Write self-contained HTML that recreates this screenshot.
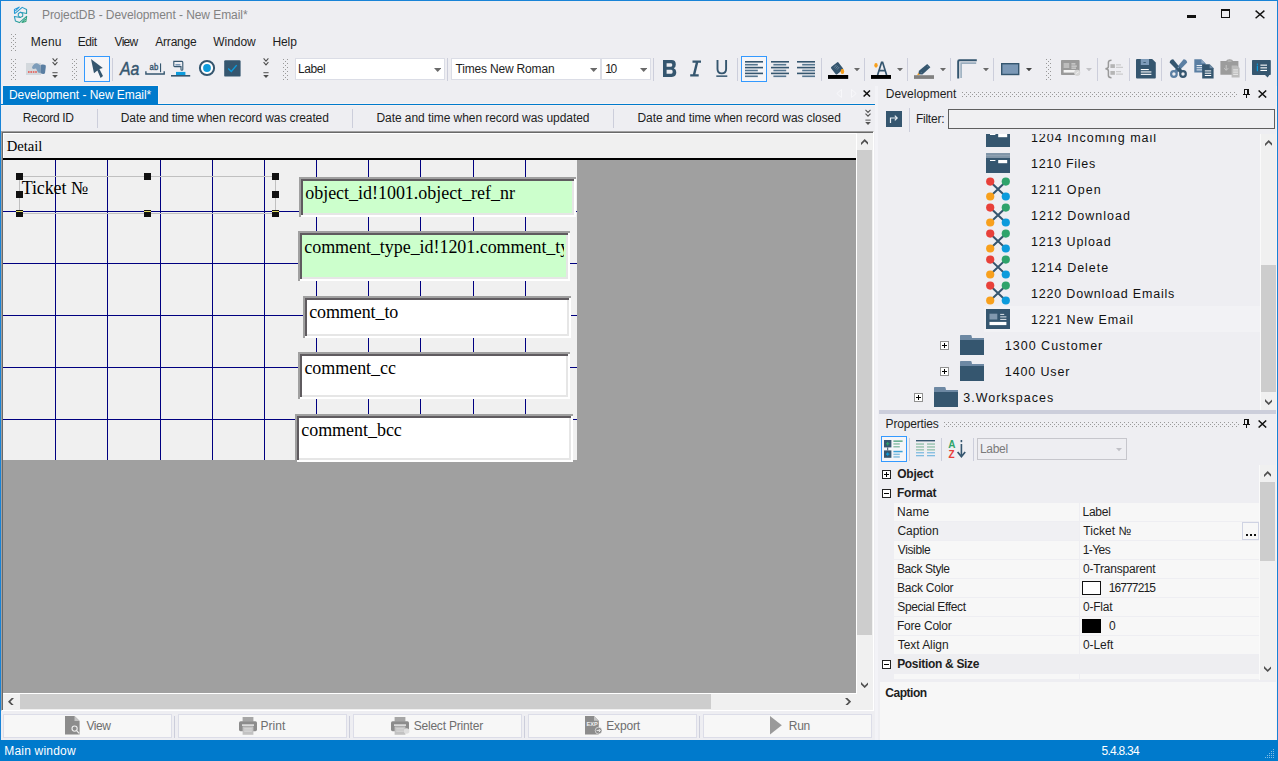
<!DOCTYPE html><html><head><meta charset="utf-8"><title>ProjectDB - Development - New Email*</title><style>
html,body{margin:0;padding:0}body{width:1278px;height:761px;position:relative;overflow:hidden;background:#eeeef2;font-family:"Liberation Sans",sans-serif;font-size:12px}
div,svg,span{position:absolute;box-sizing:border-box}
.t{white-space:pre;display:block}
.sep{width:1px;background:#cccedb}
.combo{background:#fff;border:1px solid #dbdde6}
.btn{background:#f7f7f7;border:1px solid #dcdde8}
</style></head><body>
<div style="left:0px;top:0px;width:1278px;height:1px;background:#1883d7"></div>
<div style="left:0px;top:0px;width:1px;height:761px;background:#1883d7"></div>
<div style="left:1277px;top:0px;width:1px;height:761px;background:#1883d7"></div>
<svg style="left:13px;top:6px;" width="16" height="18" viewBox="0 0 16 18"><defs><linearGradient id="ga" gradientUnits="userSpaceOnUse" x1="1" y1="2" x2="14" y2="17"><stop offset="0" stop-color="#1e96e6"/><stop offset="0.5" stop-color="#2a9db5"/><stop offset="1" stop-color="#2fa35f"/></linearGradient></defs><g fill="none" stroke="url(#ga)" stroke-width="1.05" stroke-linejoin="round" stroke-linecap="round"><path d="M1.5 7.3 L1.4 3.4 L6.2 1.1 L2.6 4.6"/><path d="M2.0 7.4 L9.2 1.4 L13.6 3.5 L13.6 7.4 L7.5 6.3"/><path d="M5.3 7.5 L7.5 6.3 L9.7 7.6 L9.7 10.2 L7.5 11.4 L5.3 10.1 Z"/><path d="M13.6 10.4 L6.4 16.6 L2.4 14.9 L1.4 10.6 L7.4 11.4"/><path d="M13.7 10.5 L12.8 15.6 L9.0 16.5 L12.4 13.2"/></g></svg>
<div style="left:1187px;top:14.6px;width:9.3px;height:3.3px;background:#111"></div>
<div style="left:1221px;top:9px;width:9.2px;height:9.2px;border:1px solid #111;border-top:2.6px solid #111"></div>
<svg style="left:1255px;top:9.6px;" width="10" height="9" viewBox="0 0 10 9"><path d="M0.6 0.6 L9.4 8.2 M9.4 0.6 L0.6 8.2" stroke="#111" stroke-width="1.4" fill="none"/></svg>
<svg style="left:11px;top:34px;shape-rendering:crispEdges;" width="5" height="18" viewBox="0 0 5 18"><g fill="#999"><rect x="0" y="0" width="1" height="1"/><rect x="4" y="0" width="1" height="1"/><rect x="2" y="2" width="1" height="1"/><rect x="0" y="4" width="1" height="1"/><rect x="4" y="4" width="1" height="1"/><rect x="2" y="6" width="1" height="1"/><rect x="0" y="8" width="1" height="1"/><rect x="4" y="8" width="1" height="1"/><rect x="2" y="10" width="1" height="1"/><rect x="0" y="12" width="1" height="1"/><rect x="4" y="12" width="1" height="1"/><rect x="2" y="14" width="1" height="1"/><rect x="0" y="16" width="1" height="1"/><rect x="4" y="16" width="1" height="1"/></g></svg>
<svg style="left:11px;top:59px;shape-rendering:crispEdges;" width="5" height="21" viewBox="0 0 5 21"><g fill="#999"><rect x="0" y="0" width="1" height="1"/><rect x="4" y="0" width="1" height="1"/><rect x="2" y="2" width="1" height="1"/><rect x="0" y="4" width="1" height="1"/><rect x="4" y="4" width="1" height="1"/><rect x="2" y="6" width="1" height="1"/><rect x="0" y="8" width="1" height="1"/><rect x="4" y="8" width="1" height="1"/><rect x="2" y="10" width="1" height="1"/><rect x="0" y="12" width="1" height="1"/><rect x="4" y="12" width="1" height="1"/><rect x="2" y="14" width="1" height="1"/><rect x="0" y="16" width="1" height="1"/><rect x="4" y="16" width="1" height="1"/><rect x="2" y="18" width="1" height="1"/><rect x="0" y="20" width="1" height="1"/><rect x="4" y="20" width="1" height="1"/></g></svg>
<svg style="left:26px;top:63px;" width="20" height="12" viewBox="0 0 20 12"><rect x="0" y="0" width="15" height="12" fill="#d3d8dd"/><rect x="2" y="8.2" width="1.6" height="1.6" fill="#e8564f"/><rect x="4.4" y="8.2" width="1.6" height="1.6" fill="#e8564f"/><rect x="6.8" y="8.2" width="1.6" height="1.6" fill="#e8564f"/><rect x="9.2" y="8.2" width="1.6" height="1.6" fill="#e8564f"/><path d="M6 4.2 Q8 0 11 0.2 L14 2 L14 10 L12 9.5 L10 5.5 L7.5 6 Q6 6 6 4.2 Z" fill="#7d9cba"/><path d="M14.5 2.2 Q15 1.3 17 1.5 L19.3 2 Q20 2.3 19.8 4 L19 10 Q18.6 11.2 17 11 L15.2 10.6 Q14.2 10.2 14.3 9 Z" fill="#5a7ea2"/></svg>
<svg style="left:52px;top:58px;" width="6" height="20" viewBox="0 0 6 20"><path d="M0.6 0.4 L3 3.1 L5.4 0.4 M0.6 4.2 L3 6.9 L5.4 4.2" stroke="#505050" stroke-width="1.1" fill="none"/><rect x="0.4" y="14.2" width="5.2" height="1" fill="#505050"/><path d="M0.2 17 H5.8 L3 20 Z" fill="#505050"/></svg>
<svg style="left:72px;top:59px;shape-rendering:crispEdges;" width="5" height="21" viewBox="0 0 5 21"><g fill="#999"><rect x="0" y="0" width="1" height="1"/><rect x="4" y="0" width="1" height="1"/><rect x="2" y="2" width="1" height="1"/><rect x="0" y="4" width="1" height="1"/><rect x="4" y="4" width="1" height="1"/><rect x="2" y="6" width="1" height="1"/><rect x="0" y="8" width="1" height="1"/><rect x="4" y="8" width="1" height="1"/><rect x="2" y="10" width="1" height="1"/><rect x="0" y="12" width="1" height="1"/><rect x="4" y="12" width="1" height="1"/><rect x="2" y="14" width="1" height="1"/><rect x="0" y="16" width="1" height="1"/><rect x="4" y="16" width="1" height="1"/><rect x="2" y="18" width="1" height="1"/><rect x="0" y="20" width="1" height="1"/><rect x="4" y="20" width="1" height="1"/></g></svg>
<div style="left:84px;top:56px;width:26px;height:26px;border:1px solid #3399ff;background:#f5f5f8"></div>
<svg style="left:90px;top:58px;" width="14" height="21" viewBox="0 0 14 21"><path d="M1 0.9 L12.8 9.9 L9.4 11.0 L13.0 18.0 L10.6 20.0 L7.4 12.4 L4.0 15.2 Z" fill="#35566f"/></svg>
<div style="left:112px;top:58px;width:1px;height:23px;background:#cccedb;"></div>
<svg style="left:117.5px;top:58.4px;" width="24" height="22" viewBox="0 0 24 22"><text x="2" y="17.4" font-family="Liberation Sans" font-style="italic" font-size="18.5" fill="#35566f" stroke="#35566f" stroke-width="0.45" textLength="19.4" lengthAdjust="spacingAndGlyphs">Aa</text></svg>
<svg style="left:145px;top:62px;" width="20" height="14" viewBox="0 0 20 14"><path d="M0.9 9.3 V12 H19.2 V9.3" fill="none" stroke="#35566f" stroke-width="1.4"/><rect x="15" y="1.4" width="1.1" height="8.8" fill="#35566f"/><text x="4.6" y="8.2" font-family="Liberation Sans" font-size="8.2" font-weight="400" stroke="#35566f" stroke-width="0.35" fill="#35566f" textLength="8.6" lengthAdjust="spacingAndGlyphs">ab</text></svg>
<svg style="left:171px;top:60px;" width="20" height="17" viewBox="0 0 20 17"><path d="M2.8 1.4 H11 Q11.8 1.4 11.8 2.4 V9.4 Q11.8 10.3 10.9 10.3 Q10 10.3 10 9.4 V6.6 H3.6 Q2.8 6.6 2.8 5.8 Z" fill="none" stroke="#35566f" stroke-width="1.1"/><rect x="4.4" y="4" width="5" height="1.6" fill="#7c9ab8"/><rect x="5" y="11.9" width="9.4" height="3.2" fill="#0c9bdc"/><rect x="0" y="15" width="19.2" height="1.6" fill="#35566f"/></svg>
<svg style="left:197.5px;top:59.400000000000006px;" width="18" height="18" viewBox="0 0 18 18"><circle cx="9" cy="9" r="7.1" fill="#fff" stroke="#35566f" stroke-width="2"/><circle cx="9" cy="9" r="3.9" fill="#0c9bdc"/></svg>
<svg style="left:224px;top:60px;" width="17" height="17" viewBox="0 0 17 17"><rect x="0.2" y="0.2" width="16.4" height="16.4" rx="1.2" fill="#35566f"/><path d="M4.2 8.5 L7.3 11.5 L12.7 5.1" fill="none" stroke="#0c9bdc" stroke-width="1.4"/></svg>
<svg style="left:263px;top:58px;" width="6" height="20" viewBox="0 0 6 20"><path d="M0.6 0.4 L3 3.1 L5.4 0.4 M0.6 4.2 L3 6.9 L5.4 4.2" stroke="#505050" stroke-width="1.1" fill="none"/><rect x="0.4" y="14.2" width="5.2" height="1" fill="#505050"/><path d="M0.2 17 H5.8 L3 20 Z" fill="#505050"/></svg>
<svg style="left:283px;top:59px;shape-rendering:crispEdges;" width="5" height="21" viewBox="0 0 5 21"><g fill="#999"><rect x="0" y="0" width="1" height="1"/><rect x="4" y="0" width="1" height="1"/><rect x="2" y="2" width="1" height="1"/><rect x="0" y="4" width="1" height="1"/><rect x="4" y="4" width="1" height="1"/><rect x="2" y="6" width="1" height="1"/><rect x="0" y="8" width="1" height="1"/><rect x="4" y="8" width="1" height="1"/><rect x="2" y="10" width="1" height="1"/><rect x="0" y="12" width="1" height="1"/><rect x="4" y="12" width="1" height="1"/><rect x="2" y="14" width="1" height="1"/><rect x="0" y="16" width="1" height="1"/><rect x="4" y="16" width="1" height="1"/><rect x="2" y="18" width="1" height="1"/><rect x="0" y="20" width="1" height="1"/><rect x="4" y="20" width="1" height="1"/></g></svg>
<div class="combo" style="left:295px;top:58px;width:150px;height:22px;"></div>
<svg style="left:433.6px;top:68.0px;" width="7.4" height="4" viewBox="0 0 7.4 4"><path d="M0 0H7.4 L3.7 4 Z" fill="#6a6a6a"/></svg>
<div style="left:447px;top:58px;width:1px;height:23px;background:#cccedb;"></div>
<div class="combo" style="left:451px;top:58px;width:150px;height:22px;"></div>
<svg style="left:589.5999999999999px;top:68.0px;" width="7.4" height="4" viewBox="0 0 7.4 4"><path d="M0 0H7.4 L3.7 4 Z" fill="#6a6a6a"/></svg>
<div class="combo" style="left:601px;top:58px;width:50px;height:22px;"></div>
<svg style="left:639.8px;top:68.0px;" width="7.4" height="4" viewBox="0 0 7.4 4"><path d="M0 0H7.4 L3.7 4 Z" fill="#6a6a6a"/></svg>
<div style="left:653px;top:58px;width:1px;height:23px;background:#cccedb;"></div>
<svg style="left:662.9px;top:60px;" width="14" height="17" viewBox="0 0 14 17"><path fill-rule="evenodd" d="M0 0 H8.6 Q12.8 0 12.8 4.4 Q12.8 7.4 10.8 8.3 Q13.3 9.2 13.3 12.3 Q13.3 16.9 8.8 16.9 H0 Z M3.6 3.2 V6.8 H8 Q9.3 6.8 9.3 5 Q9.3 3.2 8 3.2 Z M3.6 9.8 V13.7 H8.3 Q9.7 13.7 9.7 11.7 Q9.7 9.8 8.3 9.8 Z" fill="#35566f"/></svg>
<svg style="left:690px;top:60.3px;" width="12" height="17" viewBox="0 0 12 17"><path d="M2.5 0.5 H11 V2.7 H8.2 L5.4 14.3 H8.7 V16.5 H0.2 V14.3 H2.9 L5.7 2.7 H2.5 Z" fill="#35566f"/></svg>
<svg style="left:716px;top:60px;" width="12" height="17" viewBox="0 0 12 17"><path d="M1.5 0 V9 Q1.5 13.4 5.8 13.4 Q10.1 13.4 10.1 9 V0" fill="none" stroke="#35566f" stroke-width="1.9"/><rect x="0.3" y="15.4" width="11" height="1.5" fill="#35566f"/></svg>
<div style="left:737px;top:58px;width:1px;height:23px;background:#cccedb;"></div>
<div style="left:741px;top:56px;width:26px;height:26px;border:1px solid #3399ff;background:#f5f5f8"></div>
<svg style="left:745px;top:60px;" width="18" height="18" viewBox="0 0 18 18"><rect x="0" y="1.00" width="18" height="1.6" fill="#35566f"/><rect x="0.00" y="3.90" width="12.80" height="1.6" fill="#55768f"/><rect x="0" y="6.80" width="18" height="1.6" fill="#35566f"/><rect x="0.00" y="9.70" width="12.80" height="1.6" fill="#55768f"/><rect x="0" y="12.60" width="18" height="1.6" fill="#35566f"/><rect x="0.00" y="15.50" width="12.80" height="1.6" fill="#55768f"/></svg>
<svg style="left:771.2px;top:60px;" width="18" height="18" viewBox="0 0 18 18"><rect x="0" y="1.00" width="18" height="1.6" fill="#35566f"/><rect x="2.40" y="3.90" width="12.80" height="1.6" fill="#55768f"/><rect x="0" y="6.80" width="18" height="1.6" fill="#35566f"/><rect x="2.40" y="9.70" width="12.80" height="1.6" fill="#55768f"/><rect x="0" y="12.60" width="18" height="1.6" fill="#35566f"/><rect x="2.40" y="15.50" width="12.80" height="1.6" fill="#55768f"/></svg>
<svg style="left:797px;top:60px;" width="18" height="18" viewBox="0 0 18 18"><rect x="0" y="1.00" width="18" height="1.6" fill="#35566f"/><rect x="5.20" y="3.90" width="12.80" height="1.6" fill="#55768f"/><rect x="0" y="6.80" width="18" height="1.6" fill="#35566f"/><rect x="5.20" y="9.70" width="12.80" height="1.6" fill="#55768f"/><rect x="0" y="12.60" width="18" height="1.6" fill="#35566f"/><rect x="5.20" y="15.50" width="12.80" height="1.6" fill="#55768f"/></svg>
<div style="left:821px;top:58px;width:1px;height:23px;background:#cccedb;"></div>
<svg style="left:828px;top:61px;" width="21" height="18" viewBox="0 0 21 18"><rect x="4.4" y="2.6" width="9.4" height="9.4" rx="1.2" transform="rotate(-38 9.1 7.3)" fill="#35566f"/><path d="M6.2 6.6 L8.4 4 M7.6 7.6 L9.8 5 M9 8.6 L11.2 6" stroke="#7f99b0" stroke-width="0.7"/><ellipse cx="14.4" cy="10.4" rx="1.8" ry="2.6" fill="#f8a01c"/><rect x="0" y="14" width="20.2" height="3.9" fill="#000"/></svg>
<svg style="left:853.5px;top:67.94999999999999px;" width="6.0" height="3.3" viewBox="0 0 6.0 3.3"><path d="M0 0H6.0 L3.0 3.3 Z" fill="#6a6a6a"/></svg>
<div style="left:864px;top:58px;width:1px;height:23px;background:#cccedb;"></div>
<svg style="left:871px;top:61px;" width="21" height="18" viewBox="0 0 21 18"><ellipse cx="5" cy="4.3" rx="1.7" ry="2.4" fill="#f8a01c"/><path d="M6.6 14 L10.6 1.3 H11.6 L15.6 14 M8 9.6 H14.2" fill="none" stroke="#35566f" stroke-width="1.7"/><rect x="0" y="14" width="20" height="3.9" fill="#000"/></svg>
<svg style="left:896.5px;top:67.94999999999999px;" width="6.0" height="3.3" viewBox="0 0 6.0 3.3"><path d="M0 0H6.0 L3.0 3.3 Z" fill="#6a6a6a"/></svg>
<div style="left:907px;top:58px;width:1px;height:23px;background:#cccedb;"></div>
<svg style="left:914px;top:61px;" width="21" height="18" viewBox="0 0 21 18"><path d="M13.2 3.0 L16.4 6.2 L8.4 13.6 L4.2 13.2 L5.0 9.8 Z" fill="#35566f"/><path d="M13.4 5.2 L14.4 6.2 M7 11.2 L8 12.2" stroke="#7f99b0" stroke-width="0.6"/><path d="M4.2 12.0 L5.8 13.8 L3.0 14.4 Z" fill="#f8a01c"/><rect x="0" y="14.2" width="20" height="3.7" fill="#808080"/></svg>
<svg style="left:939.5px;top:67.94999999999999px;" width="6.0" height="3.3" viewBox="0 0 6.0 3.3"><path d="M0 0H6.0 L3.0 3.3 Z" fill="#6a6a6a"/></svg>
<div style="left:950px;top:58px;width:1px;height:23px;background:#cccedb;"></div>
<svg style="left:956.6px;top:59.1px;" width="21" height="20" viewBox="0 0 21 20"><path d="M1.2 19.5 V2.4 Q1.2 1.2 2.4 1.2 H19.8" fill="none" stroke="#35566f" stroke-width="2"/><path d="M4.1 19 V4.1 H19.2" fill="none" stroke="#9aadbe" stroke-width="1.6"/></svg>
<svg style="left:982.6px;top:67.94999999999999px;" width="6.0" height="3.3" viewBox="0 0 6.0 3.3"><path d="M0 0H6.0 L3.0 3.3 Z" fill="#6a6a6a"/></svg>
<div style="left:993px;top:58px;width:1px;height:23px;background:#cccedb;"></div>
<svg style="left:1000.5px;top:62.6px;" width="19" height="13" viewBox="0 0 19 13"><rect x="0.7" y="0.7" width="17" height="10.8" fill="#7b98b6" stroke="#35566f" stroke-width="1.4"/></svg>
<svg style="left:1025.5px;top:67.94999999999999px;" width="6.0" height="3.3" viewBox="0 0 6.0 3.3"><path d="M0 0H6.0 L3.0 3.3 Z" fill="#444"/></svg>
<svg style="left:1046px;top:59px;shape-rendering:crispEdges;" width="5" height="21" viewBox="0 0 5 21"><g fill="#999"><rect x="0" y="0" width="1" height="1"/><rect x="4" y="0" width="1" height="1"/><rect x="2" y="2" width="1" height="1"/><rect x="0" y="4" width="1" height="1"/><rect x="4" y="4" width="1" height="1"/><rect x="2" y="6" width="1" height="1"/><rect x="0" y="8" width="1" height="1"/><rect x="4" y="8" width="1" height="1"/><rect x="2" y="10" width="1" height="1"/><rect x="0" y="12" width="1" height="1"/><rect x="4" y="12" width="1" height="1"/><rect x="2" y="14" width="1" height="1"/><rect x="0" y="16" width="1" height="1"/><rect x="4" y="16" width="1" height="1"/><rect x="2" y="18" width="1" height="1"/><rect x="0" y="20" width="1" height="1"/><rect x="4" y="20" width="1" height="1"/></g></svg>
<svg style="left:1061px;top:60.3px;" width="20" height="17" viewBox="0 0 20 17"><rect x="0" y="0" width="18.6" height="15" rx="0.8" fill="#9a9a9a"/><rect x="2.6" y="3" width="5.6" height="5" fill="#bdbdbd"/><rect x="10.4" y="3.4" width="4" height="1" fill="#e0e0e0"/><rect x="10.4" y="5.6" width="5.4" height="1" fill="#e0e0e0"/><rect x="10.4" y="7.6" width="4.6" height="1" fill="#e0e0e0"/><rect x="2.6" y="10" width="12" height="2.6" fill="#f4f4f4"/><circle cx="16.2" cy="12.8" r="3.1" fill="#d6d6d6"/><path d="M14.6 13.8 L17.8 11.8" stroke="#efefef" stroke-width="1"/></svg>
<svg style="left:1086.4px;top:67.94999999999999px;" width="6.0" height="3.3" viewBox="0 0 6.0 3.3"><path d="M0 0H6.0 L3.0 3.3 Z" fill="#c2c2c6"/></svg>
<div style="left:1097px;top:58px;width:1px;height:23px;background:#cccedb;"></div>
<svg style="left:1104px;top:58.6px;" width="20" height="20" viewBox="0 0 20 20"><path d="M7.5 1.2 Q4.4 1.2 4.4 3.4 V7.6 Q4.4 9.6 1.4 9.8 Q4.4 10 4.4 12 V16.6 Q4.4 18.8 7.5 18.8" fill="none" stroke="#9a9a9a" stroke-width="1.5"/><rect x="6.4" y="5.2" width="4.5" height="3.8" fill="#b5b5b5"/><rect x="6.4" y="12" width="4.5" height="3.8" fill="#b5b5b5"/><rect x="12" y="5.4" width="5" height="1" fill="#c4c4c4"/><rect x="12" y="7.8" width="7" height="1" fill="#c4c4c4"/><rect x="12" y="12.2" width="5" height="1" fill="#c4c4c4"/><rect x="12" y="14.6" width="7" height="1" fill="#c4c4c4"/></svg>
<div style="left:1129px;top:58px;width:1px;height:23px;background:#cccedb;"></div>
<svg style="left:1136px;top:59.3px;" width="20" height="20" viewBox="0 0 20 20"><path d="M1 0 H16.2 L19.8 3.6 V18.6 Q19.8 19.6 18.8 19.6 H1 Q0 19.6 0 18.6 V1 Q0 0 1 0 Z" fill="#35566f"/><rect x="4.8" y="0" width="8.2" height="6" fill="#7c9ab8"/><rect x="7.4" y="3" width="2.4" height="0.9" fill="#35566f"/><rect x="4.8" y="10" width="8" height="1.1" fill="#fff"/><rect x="4.8" y="12.4" width="10.6" height="1.1" fill="#fff"/><rect x="4.8" y="14.8" width="10.6" height="1.1" fill="#fff"/></svg>
<div style="left:1161px;top:58px;width:1px;height:23px;background:#cccedb;"></div>
<svg style="left:1168.5px;top:59.2px;" width="19" height="19" viewBox="0 0 19 19"><path d="M14.6 0.2 Q17.8 0.6 18.2 3.6 L8 14 L5.4 11.6 Z" fill="#5b7fa3"/><path d="M4.2 0.2 Q1 0.6 0.6 3.6 L10.8 14 L13.4 11.6 Z" fill="#35566f"/><circle cx="4.9" cy="15" r="2.8" fill="none" stroke="#5b7fa3" stroke-width="2.2"/><circle cx="14" cy="15" r="2.8" fill="none" stroke="#35566f" stroke-width="2.2"/><circle cx="9.4" cy="8.4" r="0.8" fill="#7c9ab8"/></svg>
<svg style="left:1194px;top:59.1px;" width="20" height="20" viewBox="0 0 20 20"><path d="M0.3 0.3 H7.4 L11.4 4.3 V13.6 H0.3 Z" fill="#5b7fa3"/><path d="M7.4 0.3 L11.4 4.3 H7.4 Z" fill="#8aa4bf"/><rect x="2.6" y="6" width="5.4" height="1" fill="#e6edf3"/><rect x="2.6" y="8.2" width="5.4" height="1" fill="#e6edf3"/><rect x="2.6" y="10.4" width="5.4" height="1" fill="#e6edf3"/><path d="M8.2 5.3 H15.6 L19.6 9.3 V19.6 H8.2 Z" fill="#35566f"/><path d="M15.6 5.3 L19.6 9.3 H15.6 Z" fill="#6f8ba6"/><rect x="10.8" y="11.4" width="6.4" height="1" fill="#fff"/><rect x="10.8" y="13.7" width="6.4" height="1" fill="#fff"/><rect x="10.8" y="16" width="6.4" height="1" fill="#fff"/></svg>
<svg style="left:1220px;top:59.2px;" width="20" height="19" viewBox="0 0 20 19"><path d="M6.4 2 Q6.4 0.2 9.6 0.2 Q12.8 0.2 12.8 2 H18.4 V15.8 H0.4 V2 Z" fill="#9c9c9c"/><rect x="7.6" y="1.6" width="4" height="0.9" fill="#c8c8c8"/><path d="M6.2 6 V11 M4.2 9.2 L6.2 11.4 L8.2 9.2" fill="none" stroke="#c6c6c6" stroke-width="1"/><path d="M11.6 6.6 H17 L19.6 9 V18.4 H11.6 Z" fill="#bcbcbc"/><rect x="13.2" y="10.4" width="4.8" height="1" fill="#ececec"/><rect x="13.2" y="12.6" width="4.8" height="1" fill="#ececec"/><rect x="13.2" y="14.8" width="4.8" height="1" fill="#ececec"/></svg>
<div style="left:1245px;top:58px;width:1px;height:23px;background:#cccedb;"></div>
<svg style="left:1252.2px;top:60.1px;" width="19" height="18" viewBox="0 0 19 18"><path d="M0.8 0 H18 Q18.8 0 18.8 0.8 V14.2 Q18.8 15 18 15 H17.4 L15.6 17.6 L13 15 H0.8 Q0 15 0 14.2 V0.8 Q0 0 0.8 0 Z" fill="#35566f"/><rect x="4.8" y="5.6" width="1.2" height="5.6" fill="#0c9bdc"/><rect x="4.8" y="3.6" width="1.2" height="1.2" fill="#0c9bdc"/><rect x="8.4" y="4.6" width="6.6" height="1.1" fill="#fff"/><rect x="8.4" y="7.3" width="6.6" height="1.1" fill="#fff"/><rect x="8.4" y="9.9" width="6.6" height="1.1" fill="#fff"/></svg>
<div style="left:3px;top:86px;width:155px;height:19px;background:#007acc"></div>
<div style="left:3px;top:85px;width:156px;height:1px;background:#f7f3f3"></div>
<div style="left:158px;top:85px;width:1px;height:19px;background:#f7f3f3"></div>
<div style="left:158px;top:103px;width:717px;height:1px;background:#f7f3f3"></div>
<div style="left:1px;top:105px;width:874px;height:1px;background:#f7f3f3"></div>
<div style="left:1px;top:104px;width:874px;height:1px;background:#007acc"></div>
<svg style="left:836px;top:89px;" width="6" height="9" viewBox="0 0 6 9"><path d="M5.5 0.5 L0.8 4.5 L5.5 8.5 Z" fill="none" stroke="#f7f7fa" stroke-width="1"/></svg>
<svg style="left:851px;top:89px;" width="6" height="9" viewBox="0 0 6 9"><path d="M0.5 0.5 L5.2 4.5 L0.5 8.5 Z" fill="none" stroke="#f7f7fa" stroke-width="1"/></svg>
<svg style="left:863.3px;top:90.1px;" width="7.6" height="7" viewBox="0 0 7.6 7"><path d="M0.6 0.5 L7 6.5 M7 0.5 L0.6 6.5" stroke="#111" stroke-width="1.5" fill="none"/></svg>
<div style="left:97px;top:109px;width:1px;height:19px;background:#cccedb;"></div>
<div style="left:352px;top:109px;width:1px;height:19px;background:#cccedb;"></div>
<div style="left:613px;top:109px;width:1px;height:19px;background:#cccedb;"></div>
<svg style="left:864.6px;top:109px;" width="6" height="17" viewBox="0 0 6 17"><path d="M0.5 0.8 L3 3.4 L5.5 0.8 M0.5 4.6 L3 7.2 L5.5 4.6" stroke="#555" stroke-width="1.1" fill="none"/><rect x="0.4" y="10.6" width="5.2" height="1" fill="#555"/><path d="M0.2 13 H5.8 L3 16 Z" fill="#555"/></svg>
<div style="left:1px;top:131px;width:873px;height:580px;background:#f0f0f0;border-top:1px solid #a0a0a0;border-left:1px solid #a0a0a0;border-right:1px solid #fff;border-bottom:1px solid #fff"></div>
<div style="left:2px;top:132px;width:871px;height:1px;background:#696969"></div>
<div style="left:2px;top:132px;width:1px;height:578px;background:#696969"></div>
<div style="left:3px;top:133px;width:853px;height:560px;background:#a0a0a0;overflow:hidden">
<div style="left:0px;top:0px;width:853px;height:25px;background:#f0f0f0;border-top:1px solid #fff;border-left:1px solid #fff"></div>
<div style="left:0px;top:25px;width:853px;height:2px;background:#000"></div>
<div style="left:0;top:27px;width:574px;height:300px;background:#f0f0f0;overflow:hidden">
<div style="left:52px;top:0px;width:1px;height:300px;background:#000080"></div>
<div style="left:104px;top:0px;width:1px;height:300px;background:#000080"></div>
<div style="left:157px;top:0px;width:1px;height:300px;background:#000080"></div>
<div style="left:209px;top:0px;width:1px;height:300px;background:#000080"></div>
<div style="left:261px;top:0px;width:1px;height:300px;background:#000080"></div>
<div style="left:313px;top:0px;width:1px;height:300px;background:#000080"></div>
<div style="left:365px;top:0px;width:1px;height:300px;background:#000080"></div>
<div style="left:417px;top:0px;width:1px;height:300px;background:#000080"></div>
<div style="left:470px;top:0px;width:1px;height:300px;background:#000080"></div>
<div style="left:522px;top:0px;width:1px;height:300px;background:#000080"></div>
<div style="left:0px;top:51px;width:574px;height:1px;background:#000080"></div>
<div style="left:0px;top:103px;width:574px;height:1px;background:#000080"></div>
<div style="left:0px;top:155px;width:574px;height:1px;background:#000080"></div>
<div style="left:0px;top:207px;width:574px;height:1px;background:#000080"></div>
<div style="left:0px;top:259px;width:574px;height:1px;background:#000080"></div>
</div>
</div>
<div style="left:856px;top:133px;width:1px;height:561px;background:#fff"></div>
<div style="left:3px;top:693px;width:854px;height:1px;background:#fff"></div>
<div style="left:19px;top:176px;width:257px;height:38px;border:1px solid #c0c0c0"></div>
<div style="left:16px;top:173px;width:7px;height:7px;background:#111"></div>
<div style="left:16px;top:191px;width:7px;height:7px;background:#111"></div>
<div style="left:16px;top:210px;width:7px;height:7px;background:#111"></div>
<div style="left:144px;top:173px;width:7px;height:7px;background:#111"></div>
<div style="left:144px;top:210px;width:7px;height:7px;background:#111"></div>
<div style="left:272px;top:173px;width:7px;height:7px;background:#111"></div>
<div style="left:272px;top:191px;width:7px;height:7px;background:#111"></div>
<div style="left:272px;top:210px;width:7px;height:7px;background:#111"></div>
<div style="left:16px;top:211px;width:7px;height:1px;background:#e6e064"></div>
<div style="left:144px;top:211px;width:7px;height:1px;background:#e6e064"></div>
<div style="left:272px;top:211px;width:7px;height:1px;background:#e6e064"></div>
<div style="left:299px;top:177px;width:277px;height:40px;background:#a0a0a0;overflow:hidden"><div style="left:0;top:38px;width:277px;height:2px;background:#fff"></div><div style="left:275px;top:0;width:2px;height:40px;background:#fff"></div><div style="left:0;top:0;width:277px;height:2px;background:#a0a0a0"></div><div style="left:0;top:0;width:2px;height:40px;background:#a0a0a0"></div><div style="left:2px;top:2px;width:273px;height:36px;background:#e6e6e6"></div><div style="left:2px;top:2px;width:273px;height:2px;background:#5f5b5f"></div><div style="left:2px;top:2px;width:2px;height:36px;background:#5f5b5f"></div><div style="left:4px;top:4px;width:269px;height:32px;background:#ccffcc"></div><div style="left:4px;top:4px;width:267px;height:32px;overflow:hidden"><span class="t" style="left:2.24px;top:3.00px;font-size:18px;line-height:18px;color:#000;font-family:'Liberation Serif', serif;letter-spacing:-0.026px;">object_id!1001.object_ref_nr</span></div></div>
<div style="left:298px;top:231px;width:272px;height:50px;background:#a0a0a0;overflow:hidden"><div style="left:0;top:48px;width:272px;height:2px;background:#fff"></div><div style="left:270px;top:0;width:2px;height:50px;background:#fff"></div><div style="left:0;top:0;width:272px;height:2px;background:#a0a0a0"></div><div style="left:0;top:0;width:2px;height:50px;background:#a0a0a0"></div><div style="left:2px;top:2px;width:268px;height:46px;background:#e6e6e6"></div><div style="left:2px;top:2px;width:268px;height:2px;background:#5f5b5f"></div><div style="left:2px;top:2px;width:2px;height:46px;background:#5f5b5f"></div><div style="left:4px;top:4px;width:264px;height:42px;background:#ccffcc"></div><div style="left:4px;top:4px;width:262px;height:42px;overflow:hidden"><span class="t" style="left:2.24px;top:3.00px;font-size:18px;line-height:18px;color:#000;font-family:'Liberation Serif', serif;letter-spacing:-0.048px;">comment_type_id!1201.comment_type</span></div></div>
<div style="left:303px;top:296px;width:268px;height:42px;background:#a0a0a0;overflow:hidden"><div style="left:0;top:40px;width:268px;height:2px;background:#fff"></div><div style="left:266px;top:0;width:2px;height:42px;background:#fff"></div><div style="left:0;top:0;width:268px;height:2px;background:#a0a0a0"></div><div style="left:0;top:0;width:2px;height:42px;background:#a0a0a0"></div><div style="left:2px;top:2px;width:264px;height:38px;background:#e6e6e6"></div><div style="left:2px;top:2px;width:264px;height:2px;background:#5f5b5f"></div><div style="left:2px;top:2px;width:2px;height:38px;background:#5f5b5f"></div><div style="left:4px;top:4px;width:260px;height:34px;background:#ffffff"></div><div style="left:4px;top:4px;width:258px;height:34px;overflow:hidden"><span class="t" style="left:2.14px;top:3.00px;font-size:18px;line-height:18px;color:#000;font-family:'Liberation Serif', serif;letter-spacing:-0.089px;">comment_to</span></div></div>
<div style="left:298px;top:352px;width:272px;height:47px;background:#a0a0a0;overflow:hidden"><div style="left:0;top:45px;width:272px;height:2px;background:#fff"></div><div style="left:270px;top:0;width:2px;height:47px;background:#fff"></div><div style="left:0;top:0;width:272px;height:2px;background:#a0a0a0"></div><div style="left:0;top:0;width:2px;height:47px;background:#a0a0a0"></div><div style="left:2px;top:2px;width:268px;height:43px;background:#e6e6e6"></div><div style="left:2px;top:2px;width:268px;height:2px;background:#5f5b5f"></div><div style="left:2px;top:2px;width:2px;height:43px;background:#5f5b5f"></div><div style="left:4px;top:4px;width:264px;height:39px;background:#ffffff"></div><div style="left:4px;top:4px;width:262px;height:39px;overflow:hidden"><span class="t" style="left:2.44px;top:3.00px;font-size:18px;line-height:18px;color:#000;font-family:'Liberation Serif', serif;letter-spacing:-0.057px;">comment_cc</span></div></div>
<div style="left:295px;top:414px;width:278px;height:48px;background:#a0a0a0;overflow:hidden"><div style="left:0;top:46px;width:278px;height:2px;background:#fff"></div><div style="left:276px;top:0;width:2px;height:48px;background:#fff"></div><div style="left:0;top:0;width:278px;height:2px;background:#a0a0a0"></div><div style="left:0;top:0;width:2px;height:48px;background:#a0a0a0"></div><div style="left:2px;top:2px;width:274px;height:44px;background:#e6e6e6"></div><div style="left:2px;top:2px;width:274px;height:2px;background:#5f5b5f"></div><div style="left:2px;top:2px;width:2px;height:44px;background:#5f5b5f"></div><div style="left:4px;top:4px;width:270px;height:40px;background:#ffffff"></div><div style="left:4px;top:4px;width:268px;height:40px;overflow:hidden"><span class="t" style="left:2.24px;top:3.00px;font-size:18px;line-height:18px;color:#000;font-family:'Liberation Serif', serif;letter-spacing:-0.037px;">comment_bcc</span></div></div>
<span class="t" style="left:6.80px;top:139.00px;font-size:14.67px;line-height:14.67px;color:#000;font-family:'Liberation Serif', serif;letter-spacing:-0.065px;">Detail</span>
<span class="t" style="left:21.72px;top:179.00px;font-size:18px;line-height:18px;color:#000;font-family:'Liberation Serif', serif;letter-spacing:-0.122px;">Ticket №</span>
<div style="left:857px;top:133px;width:16px;height:560px;background:#f0f0f0"></div>
<div style="left:857px;top:150px;width:15px;height:485px;background:#cdcdcd"></div>
<svg style="left:860.8px;top:138.75px;" width="7.4" height="6.1" viewBox="0 0 7.4 6.1"><polygon points="0.00,3.70 3.70,0.00 7.40,3.70 7.40,6.10 3.70,2.40 0.00,6.10" fill="#505050"/></svg>
<svg style="left:860.8px;top:681.5500000000001px;" width="7.4" height="6.1" viewBox="0 0 7.4 6.1"><polygon points="0.00,2.40 3.70,6.10 7.40,2.40 7.40,0.00 3.70,3.70 0.00,0.00" fill="#505050"/></svg>
<div style="left:3px;top:694px;width:870px;height:16px;background:#f0f0f0"></div>
<div style="left:20px;top:694px;width:691px;height:15px;background:#cdcdcd"></div>
<svg style="left:8.25px;top:697.9px;" width="6.1" height="7.4" viewBox="0 0 6.1 7.4"><polygon points="3.70,0.00 0.00,3.70 3.70,7.40 6.10,7.40 2.40,3.70 6.10,0.00" fill="#505050"/></svg>
<svg style="left:844.75px;top:697.9px;" width="6.1" height="7.4" viewBox="0 0 6.1 7.4"><polygon points="2.40,0.00 6.10,3.70 2.40,7.40 0.00,7.40 3.70,3.70 0.00,0.00" fill="#505050"/></svg>
<div class="btn" style="left:3px;top:714px;width:169px;height:24px"></div>
<div style="left:174px;top:716px;width:1px;height:22px;background:#cccedb;"></div>
<div class="btn" style="left:178px;top:714px;width:169px;height:24px"></div>
<div style="left:349px;top:716px;width:1px;height:22px;background:#cccedb;"></div>
<div class="btn" style="left:353px;top:714px;width:169px;height:24px"></div>
<div style="left:524px;top:716px;width:1px;height:22px;background:#cccedb;"></div>
<div class="btn" style="left:528px;top:714px;width:169px;height:24px"></div>
<div style="left:699px;top:716px;width:1px;height:22px;background:#cccedb;"></div>
<div class="btn" style="left:703px;top:714px;width:169px;height:24px"></div>
<svg style="left:65px;top:716px;" width="15" height="19" viewBox="0 0 15 19"><path d="M0 0 H9.5 L14.6 5 V18.6 H0 Z" fill="#8c8c8c"/><path d="M9.5 0 L14.6 5 H9.5 Z" fill="#c4c4c4"/><circle cx="9.6" cy="12.6" r="2.6" fill="none" stroke="#efefef" stroke-width="1.1"/><path d="M11.6 14.6 L14.2 17.4" stroke="#efefef" stroke-width="1.3"/></svg>
<svg style="left:239px;top:717px;" width="19" height="19" viewBox="0 0 19 19"><rect x="3.6" y="0" width="10.8" height="4.6" fill="#a6a6a6"/><rect x="0" y="4.2" width="18" height="10" rx="1.6" fill="#8c8c8c"/><rect x="3" y="7.4" width="12" height="1.4" fill="#efefef"/><rect x="3.6" y="9.4" width="10.8" height="8.4" fill="#c2c2c2"/><rect x="5.2" y="11.4" width="7.6" height="1" fill="#dcdcdc"/><rect x="5.2" y="13.6" width="7.6" height="1" fill="#dcdcdc"/></svg>
<svg style="left:391.4px;top:717px;" width="19" height="19" viewBox="0 0 19 19"><rect x="3.6" y="0" width="10.8" height="4.6" fill="#a6a6a6"/><rect x="0" y="4.2" width="18" height="10" rx="1.6" fill="#8c8c8c"/><rect x="3" y="7.4" width="12" height="1.4" fill="#efefef"/><rect x="3.6" y="9.4" width="10.8" height="8.4" fill="#c2c2c2"/><rect x="5.2" y="11.4" width="7.6" height="1" fill="#dcdcdc"/><rect x="5.2" y="13.6" width="7.6" height="1" fill="#dcdcdc"/><circle cx="15.6" cy="14" r="2.8" fill="#dedede"/></svg>
<svg style="left:585px;top:716px;" width="18" height="19" viewBox="0 0 18 19"><path d="M0 0 H9 L13.8 4.8 V18.6 H0 Z" fill="#8c8c8c"/><path d="M9 0 L13.8 4.8 H9 Z" fill="#c4c4c4"/><text x="1.6" y="10.4" font-family="Liberation Sans" font-size="5.6" font-weight="700" fill="#f0f0f0">EXP</text><circle cx="13.6" cy="14.6" r="3.4" fill="#8c8c8c" stroke="#f7f7f7" stroke-width="0.6"/><path d="M11.6 14.6 H15.2 M13.8 13 L15.4 14.6 L13.8 16.2" stroke="#f4f4f4" stroke-width="0.9" fill="none"/></svg>
<svg style="left:770px;top:716px;" width="12" height="19" viewBox="0 0 12 19"><path d="M0 0 L11.8 9.3 L0 18.6 Z" fill="#9a9a9a"/></svg>
<div style="left:0px;top:740px;width:1278px;height:21px;background:#007acc"></div>
<svg style="left:1264px;top:748px;" width="12" height="12" viewBox="0 0 12 12"><rect x="9" y="1" width="1" height="1" fill="#7fbce5"/><rect x="9" y="3" width="1" height="1" fill="#7fbce5"/><rect x="7" y="3" width="1" height="1" fill="#7fbce5"/><rect x="9" y="5" width="1" height="1" fill="#7fbce5"/><rect x="7" y="5" width="1" height="1" fill="#7fbce5"/><rect x="5" y="5" width="1" height="1" fill="#7fbce5"/><rect x="9" y="7" width="1" height="1" fill="#7fbce5"/><rect x="7" y="7" width="1" height="1" fill="#7fbce5"/><rect x="5" y="7" width="1" height="1" fill="#7fbce5"/><rect x="3" y="7" width="1" height="1" fill="#7fbce5"/><rect x="9" y="9" width="1" height="1" fill="#7fbce5"/><rect x="7" y="9" width="1" height="1" fill="#7fbce5"/><rect x="5" y="9" width="1" height="1" fill="#7fbce5"/><rect x="3" y="9" width="1" height="1" fill="#7fbce5"/><rect x="1" y="9" width="1" height="1" fill="#7fbce5"/></svg>
<div style="left:875px;top:86px;width:3px;height:654px;background:#f3f3f7"></div>
<svg style="left:962px;top:92px;shape-rendering:crispEdges;" width="275" height="5" viewBox="0 0 275 5"><defs><pattern id="gp962" width="4" height="4" patternUnits="userSpaceOnUse"><rect x="0" y="0" width="1" height="1" fill="#999"/><rect x="2" y="2" width="1" height="1" fill="#999"/></pattern></defs><rect width="275" height="5" fill="url(#gp962)"/></svg>
<svg style="left:1243px;top:89px;shape-rendering:crispEdges;" width="8" height="9" viewBox="0 0 8 9"><rect x="1" y="0" width="5" height="1" fill="#111"/><rect x="1" y="0" width="1" height="5" fill="#111"/><rect x="4" y="0" width="2" height="5" fill="#111"/><rect x="0" y="5" width="7" height="1" fill="#111"/><rect x="3" y="6" width="1" height="3" fill="#111"/></svg>
<svg style="left:1258px;top:89.6px;" width="9" height="8" viewBox="0 0 9 8"><path d="M0.6 0.5 L8.2 7.5 M8.2 0.5 L0.6 7.5" stroke="#111" stroke-width="1.5" fill="none"/></svg>
<div style="left:886px;top:111px;width:16px;height:16px;background:#35566f"><svg style="left:3px;top:3px" width="10" height="10" viewBox="0 0 10 10"><path d="M1.5 9 V4 H8 M5.8 1.6 L8.2 4 L5.8 6.4" fill="none" stroke="#e8eef3" stroke-width="1.2"/></svg></div>
<div style="left:909px;top:108px;width:1px;height:24px;background:#cccedb;"></div>
<div style="left:948px;top:109px;width:327px;height:20px;background:#f0f0f2;border:1px solid #5f5f5f"></div>
<div style="left:879px;top:134px;width:382px;height:276px;overflow:hidden">
<div style="left:105px;top:172px;width:300px;height:26px;background:#f2f2f5"></div>
<svg style="left:107px;top:-7px;" width="24" height="20" viewBox="0 0 24 20"><rect x="0" y="0" width="24" height="20" fill="#35566f"/><rect x="0" y="2.2" width="24" height="1" fill="#93a5b5"/><rect x="4" y="7" width="5.4" height="1" fill="#fff"/><rect x="12.2" y="7" width="9" height="3.2" fill="#fff"/></svg>
<svg style="left:107px;top:19px;" width="24" height="20" viewBox="0 0 24 20"><rect x="0" y="0" width="24" height="20" fill="#35566f"/><rect x="0" y="0" width="24" height="5" fill="#8095a8"/><rect x="0" y="2.2" width="24" height="1" fill="#93a5b5"/><rect x="4" y="7" width="5.4" height="1" fill="#fff"/><rect x="12.2" y="7" width="9" height="3.2" fill="#fff"/></svg>
<svg style="left:107px;top:43px;" width="24" height="24" viewBox="0 0 24 24"><path d="M5 5.4 L19 18.7 M19 5.4 L5 18.7" stroke="#35566f" stroke-width="2"/><circle cx="4.2" cy="4.6" r="4.1" fill="#e8403a"/><circle cx="19.8" cy="4.6" r="4.1" fill="#2fa36b"/><circle cx="4.2" cy="19.5" r="4.1" fill="#f8a01c"/><circle cx="19.8" cy="19.5" r="4.1" fill="#0c9bdc"/></svg>
<svg style="left:107px;top:69px;" width="24" height="24" viewBox="0 0 24 24"><path d="M5 5.4 L19 18.7 M19 5.4 L5 18.7" stroke="#35566f" stroke-width="2"/><circle cx="4.2" cy="4.6" r="4.1" fill="#e8403a"/><circle cx="19.8" cy="4.6" r="4.1" fill="#2fa36b"/><circle cx="4.2" cy="19.5" r="4.1" fill="#f8a01c"/><circle cx="19.8" cy="19.5" r="4.1" fill="#0c9bdc"/></svg>
<svg style="left:107px;top:95px;" width="24" height="24" viewBox="0 0 24 24"><path d="M5 5.4 L19 18.7 M19 5.4 L5 18.7" stroke="#35566f" stroke-width="2"/><circle cx="4.2" cy="4.6" r="4.1" fill="#e8403a"/><circle cx="19.8" cy="4.6" r="4.1" fill="#2fa36b"/><circle cx="4.2" cy="19.5" r="4.1" fill="#f8a01c"/><circle cx="19.8" cy="19.5" r="4.1" fill="#0c9bdc"/></svg>
<svg style="left:107px;top:121px;" width="24" height="24" viewBox="0 0 24 24"><path d="M5 5.4 L19 18.7 M19 5.4 L5 18.7" stroke="#35566f" stroke-width="2"/><circle cx="4.2" cy="4.6" r="4.1" fill="#e8403a"/><circle cx="19.8" cy="4.6" r="4.1" fill="#2fa36b"/><circle cx="4.2" cy="19.5" r="4.1" fill="#f8a01c"/><circle cx="19.8" cy="19.5" r="4.1" fill="#0c9bdc"/></svg>
<svg style="left:107px;top:147px;" width="24" height="24" viewBox="0 0 24 24"><path d="M5 5.4 L19 18.7 M19 5.4 L5 18.7" stroke="#35566f" stroke-width="2"/><circle cx="4.2" cy="4.6" r="4.1" fill="#e8403a"/><circle cx="19.8" cy="4.6" r="4.1" fill="#2fa36b"/><circle cx="4.2" cy="19.5" r="4.1" fill="#f8a01c"/><circle cx="19.8" cy="19.5" r="4.1" fill="#0c9bdc"/></svg>
<svg style="left:107px;top:175px;" width="24" height="20" viewBox="0 0 24 20"><rect x="0" y="0" width="24" height="20" fill="#35566f"/><rect x="3.5" y="4.7" width="7.8" height="5.8" fill="#8299af"/><rect x="14.2" y="4.9" width="4" height="1" fill="#dfe6ec"/><rect x="14.2" y="7.4" width="6.2" height="1" fill="#dfe6ec"/><rect x="14.2" y="9.9" width="6.2" height="1" fill="#dfe6ec"/><rect x="3.5" y="12.9" width="16.9" height="3.2" fill="#fff"/></svg>
<svg style="left:81px;top:201px;" width="24" height="20" viewBox="0 0 24 20"><path d="M0 0.8 Q0 0 0.8 0 H10.6 Q11.4 0 11.6 0.8 L12 3 H24 V5 H0 Z" fill="#6d88a3"/><rect x="0" y="5" width="24" height="15" fill="#35566f"/></svg>
<svg style="left:61px;top:207px;shape-rendering:crispEdges;" width="9" height="9" viewBox="0 0 9 9"><rect x="0.5" y="0.5" width="8" height="8" fill="#fff" stroke="#919191"/><rect x="2" y="4" width="5" height="1" fill="#000"/><rect x="4" y="2" width="1" height="5" fill="#000"/></svg>
<svg style="left:81px;top:227px;" width="24" height="20" viewBox="0 0 24 20"><path d="M0 0.8 Q0 0 0.8 0 H10.6 Q11.4 0 11.6 0.8 L12 3 H24 V5 H0 Z" fill="#6d88a3"/><rect x="0" y="5" width="24" height="15" fill="#35566f"/></svg>
<svg style="left:61px;top:233px;shape-rendering:crispEdges;" width="9" height="9" viewBox="0 0 9 9"><rect x="0.5" y="0.5" width="8" height="8" fill="#fff" stroke="#919191"/><rect x="2" y="4" width="5" height="1" fill="#000"/><rect x="4" y="2" width="1" height="5" fill="#000"/></svg>
<svg style="left:55px;top:253px;" width="24" height="20" viewBox="0 0 24 20"><path d="M0 0.8 Q0 0 0.8 0 H10.6 Q11.4 0 11.6 0.8 L12 3 H24 V5 H0 Z" fill="#6d88a3"/><rect x="0" y="5" width="24" height="15" fill="#35566f"/></svg>
<svg style="left:35px;top:259px;shape-rendering:crispEdges;" width="9" height="9" viewBox="0 0 9 9"><rect x="0.5" y="0.5" width="8" height="8" fill="#fff" stroke="#919191"/><rect x="2" y="4" width="5" height="1" fill="#000"/><rect x="4" y="2" width="1" height="5" fill="#000"/></svg>
<span class="t" style="left:151.95px;top:-2.00px;font-size:12.5px;line-height:12.5px;color:#111;letter-spacing:0.983px;">1204 Incoming mail</span>
<span class="t" style="left:151.95px;top:24.00px;font-size:12.5px;line-height:12.5px;color:#111;letter-spacing:0.742px;">1210 Files</span>
<span class="t" style="left:151.95px;top:50.00px;font-size:12.5px;line-height:12.5px;color:#111;letter-spacing:1.116px;">1211 Open</span>
<span class="t" style="left:151.95px;top:76.00px;font-size:12.5px;line-height:12.5px;color:#111;letter-spacing:1.004px;">1212 Download</span>
<span class="t" style="left:151.95px;top:102.00px;font-size:12.5px;line-height:12.5px;color:#111;letter-spacing:0.875px;">1213 Upload</span>
<span class="t" style="left:151.95px;top:128.00px;font-size:12.5px;line-height:12.5px;color:#111;letter-spacing:0.985px;">1214 Delete</span>
<span class="t" style="left:151.95px;top:154.00px;font-size:12.5px;line-height:12.5px;color:#111;letter-spacing:0.820px;">1220 Download Emails</span>
<span class="t" style="left:151.95px;top:180.00px;font-size:12.5px;line-height:12.5px;color:#111;letter-spacing:0.861px;">1221 New Email</span>
<span class="t" style="left:125.85px;top:206.00px;font-size:12.5px;line-height:12.5px;color:#111;letter-spacing:0.998px;">1300 Customer</span>
<span class="t" style="left:125.85px;top:232.00px;font-size:12.5px;line-height:12.5px;color:#111;letter-spacing:0.855px;">1400 User</span>
<span class="t" style="left:84.23px;top:258.00px;font-size:12.5px;line-height:12.5px;color:#111;letter-spacing:1.004px;">3.Workspaces</span>
</div>
<div style="left:1260px;top:134px;width:1px;height:276px;background:#fafafa"></div>
<div style="left:1276px;top:86px;width:1px;height:654px;background:#f6f4f4"></div>
<div style="left:1261px;top:134px;width:15px;height:276px;background:#f0f0f0"></div>
<div style="left:1261px;top:265px;width:15px;height:127px;background:#cdcdcd"></div>
<svg style="left:1264.8999999999999px;top:140.04999999999998px;" width="7.4" height="6.1" viewBox="0 0 7.4 6.1"><polygon points="0.00,3.70 3.70,0.00 7.40,3.70 7.40,6.10 3.70,2.40 0.00,6.10" fill="#505050"/></svg>
<svg style="left:1264.8px;top:398.95px;" width="7.4" height="6.1" viewBox="0 0 7.4 6.1"><polygon points="0.00,2.40 3.70,6.10 7.40,2.40 7.40,0.00 3.70,3.70 0.00,0.00" fill="#505050"/></svg>
<div style="left:879px;top:410px;width:397px;height:4px;background:#cccedb"></div>
<svg style="left:944px;top:422px;shape-rendering:crispEdges;" width="295" height="5" viewBox="0 0 295 5"><defs><pattern id="gp944" width="4" height="4" patternUnits="userSpaceOnUse"><rect x="0" y="0" width="1" height="1" fill="#999"/><rect x="2" y="2" width="1" height="1" fill="#999"/></pattern></defs><rect width="295" height="5" fill="url(#gp944)"/></svg>
<svg style="left:1243px;top:419px;shape-rendering:crispEdges;" width="8" height="9" viewBox="0 0 8 9"><rect x="1" y="0" width="5" height="1" fill="#111"/><rect x="1" y="0" width="1" height="5" fill="#111"/><rect x="4" y="0" width="2" height="5" fill="#111"/><rect x="0" y="5" width="7" height="1" fill="#111"/><rect x="3" y="6" width="1" height="3" fill="#111"/></svg>
<svg style="left:1258px;top:419.6px;" width="9" height="8" viewBox="0 0 9 8"><path d="M0.6 0.5 L8.2 7.5 M8.2 0.5 L0.6 7.5" stroke="#111" stroke-width="1.5" fill="none"/></svg>
<div style="left:881px;top:436px;width:26px;height:26px;border:1px solid #3399ff;background:#f5f5f8"></div>
<svg style="left:884px;top:440px;" width="19" height="18" viewBox="0 0 19 18"><rect x="0" y="0" width="7.4" height="7.4" fill="#35566f"/><rect x="0" y="10.4" width="7.4" height="7.4" fill="#35566f"/><rect x="3.2" y="7.4" width="1" height="3" fill="#35566f"/><path d="M2 3.7 H5.4 M3.7 2 V5.4" stroke="#2fa36b" stroke-width="1.1"/><path d="M2 14.1 H5.4 M3.7 12.4 V15.8" stroke="#0c9bdc" stroke-width="1.1"/><rect x="9.4" y="0.4" width="9.2" height="1.5" fill="#5da98a"/><rect x="9.4" y="3.2" width="6.4" height="1.5" fill="#8fc0ab"/><rect x="9.4" y="6" width="6.4" height="1.5" fill="#8fc0ab"/><rect x="9.4" y="10.8" width="9.2" height="1.5" fill="#3da2d8"/><rect x="9.4" y="13.6" width="6.4" height="1.5" fill="#86bfdf"/><rect x="9.4" y="16.2" width="6.4" height="1.5" fill="#86bfdf"/></svg>
<div style="left:909px;top:438px;width:1px;height:23px;background:#cccedb;"></div>
<svg style="left:916px;top:440px;" width="19" height="18" viewBox="0 0 19 18"><rect x="0" y="0" width="19" height="1.4" fill="#35566f"/><rect x="0" y="3.4" width="8" height="1.3" fill="#8fbfa8"/><rect x="11" y="3.4" width="8" height="1.3" fill="#8fbfa8"/><rect x="0" y="6.3" width="8" height="1.3" fill="#8fbfa8"/><rect x="11" y="6.3" width="8" height="1.3" fill="#8fbfa8"/><rect x="0" y="9.2" width="8" height="1.3" fill="#8fbfa8"/><rect x="11" y="9.2" width="8" height="1.3" fill="#8fbfa8"/><rect x="0" y="12.1" width="8" height="1.3" fill="#7fbbe0"/><rect x="11" y="12.1" width="8" height="1.3" fill="#7fbbe0"/><rect x="0" y="15.0" width="8" height="1.3" fill="#7fbbe0"/><rect x="11" y="15.0" width="8" height="1.3" fill="#7fbbe0"/></svg>
<div style="left:941px;top:438px;width:1px;height:23px;background:#cccedb;"></div>
<svg style="left:948px;top:439px;" width="19" height="20" viewBox="0 0 19 20"><text x="0.2" y="8.6" font-family="Liberation Sans" font-size="10" font-weight="700" fill="#2fa36b">A</text><text x="0.6" y="19" font-family="Liberation Sans" font-size="10" font-weight="700" fill="#e8403a">Z</text><rect x="12.6" y="1" width="1.6" height="2.2" fill="#35566f"/><rect x="12.6" y="5" width="1.6" height="11" fill="#35566f"/><path d="M9.6 13 L13.4 17.6 L17.2 13" fill="none" stroke="#35566f" stroke-width="1.7"/></svg>
<div style="left:973px;top:438px;width:1px;height:23px;background:#cccedb;"></div>
<div style="left:977px;top:438px;width:150px;height:22px;background:#eeeef2;border:1px solid #c6c6cc"></div>
<svg style="left:1115.5px;top:448.35px;" width="6.0" height="3.3" viewBox="0 0 6.0 3.3"><path d="M0 0H6.0 L3.0 3.3 Z" fill="#c0c0c6"/></svg>
<div style="left:879px;top:465px;width:381px;height:214px;overflow:hidden;background:#eeeef2">
<div style="left:15px;top:38px;width:185px;height:18px;background:#f7f7f7"></div>
<div style="left:201px;top:38px;width:179px;height:18px;background:#f7f7f7"></div>
<div style="left:15px;top:57px;width:185px;height:18px;background:#f0f0f3"></div>
<div style="left:201px;top:57px;width:179px;height:18px;background:#f7f7f7"></div>
<div style="left:15px;top:76px;width:185px;height:18px;background:#f7f7f7"></div>
<div style="left:201px;top:76px;width:179px;height:18px;background:#f7f7f7"></div>
<div style="left:15px;top:95px;width:185px;height:18px;background:#f7f7f7"></div>
<div style="left:201px;top:95px;width:179px;height:18px;background:#f7f7f7"></div>
<div style="left:15px;top:114px;width:185px;height:18px;background:#f7f7f7"></div>
<div style="left:201px;top:114px;width:179px;height:18px;background:#f7f7f7"></div>
<div style="left:15px;top:133px;width:185px;height:18px;background:#f7f7f7"></div>
<div style="left:201px;top:133px;width:179px;height:18px;background:#f7f7f7"></div>
<div style="left:15px;top:152px;width:185px;height:18px;background:#f7f7f7"></div>
<div style="left:201px;top:152px;width:179px;height:18px;background:#f7f7f7"></div>
<div style="left:15px;top:171px;width:185px;height:18px;background:#f7f7f7"></div>
<div style="left:201px;top:171px;width:179px;height:18px;background:#f7f7f7"></div>
<div style="left:15px;top:190px;width:365px;height:18px;background:#eeeef1"></div>
<div style="left:15px;top:209px;width:185px;height:18px;background:#f7f7f7"></div>
<div style="left:201px;top:209px;width:179px;height:18px;background:#f7f7f7"></div>
<svg style="left:3px;top:5px;shape-rendering:crispEdges;" width="9" height="9" viewBox="0 0 9 9"><rect x="0.5" y="0.5" width="8" height="8" fill="#fff" stroke="#222"/><rect x="2" y="4" width="5" height="1" fill="#000"/><rect x="4" y="2" width="1" height="5" fill="#000"/></svg>
<svg style="left:3px;top:24px;shape-rendering:crispEdges;" width="9" height="9" viewBox="0 0 9 9"><rect x="0.5" y="0.5" width="8" height="8" fill="#fff" stroke="#222"/><rect x="2" y="4" width="5" height="1" fill="#000"/></svg>
<svg style="left:3px;top:195px;shape-rendering:crispEdges;" width="9" height="9" viewBox="0 0 9 9"><rect x="0.5" y="0.5" width="8" height="8" fill="#fff" stroke="#222"/><rect x="2" y="4" width="5" height="1" fill="#000"/></svg>
<div style="left:363px;top:57px;width:17px;height:18px;background:#f7f7f7;border:1px solid #cfd3e3"></div>
<div style="left:367px;top:69px;width:2px;height:2px;background:#111"></div>
<div style="left:371px;top:69px;width:2px;height:2px;background:#111"></div>
<div style="left:375px;top:69px;width:2px;height:2px;background:#111"></div>
<div style="left:203px;top:116px;width:19px;height:14px;background:#fff;border:1px solid #111"></div>
<div style="left:203px;top:154px;width:19px;height:14px;background:#000"></div>
</div>
<div style="left:1259px;top:465px;width:1px;height:215px;background:#fafafa"></div>
<div style="left:1260px;top:465px;width:16px;height:215px;background:#f0f0f0"></div>
<div style="left:1260px;top:482px;width:15px;height:79px;background:#cdcdcd"></div>
<svg style="left:1263.8999999999999px;top:470.95px;" width="7.4" height="6.1" viewBox="0 0 7.4 6.1"><polygon points="0.00,3.70 3.70,0.00 7.40,3.70 7.40,6.10 3.70,2.40 0.00,6.10" fill="#505050"/></svg>
<svg style="left:1263.8999999999999px;top:666.45px;" width="7.4" height="6.1" viewBox="0 0 7.4 6.1"><polygon points="0.00,2.40 3.70,6.10 7.40,2.40 7.40,0.00 3.70,3.70 0.00,0.00" fill="#505050"/></svg>
<div style="left:880px;top:682px;width:396px;height:58px;background:#f7f7f7"></div>
<span class="t" style="left:42.00px;top:9.00px;font-size:12px;line-height:12px;color:#828282;letter-spacing:-0.072px;">ProjectDB - Development - New Email*</span>
<span class="t" style="left:30.80px;top:36.00px;font-size:12px;line-height:12px;color:#1e1e1e;letter-spacing:0.236px;">Menu</span>
<span class="t" style="left:77.80px;top:36.00px;font-size:12px;line-height:12px;color:#1e1e1e;letter-spacing:-0.453px;">Edit</span>
<span class="t" style="left:114.59px;top:36.00px;font-size:12px;line-height:12px;color:#1e1e1e;letter-spacing:-0.717px;">View</span>
<span class="t" style="left:155.30px;top:36.00px;font-size:12px;line-height:12px;color:#1e1e1e;letter-spacing:-0.215px;">Arrange</span>
<span class="t" style="left:213.34px;top:36.00px;font-size:12px;line-height:12px;color:#1e1e1e;letter-spacing:-0.054px;">Window</span>
<span class="t" style="left:272.50px;top:36.00px;font-size:12px;line-height:12px;color:#1e1e1e;letter-spacing:-0.108px;">Help</span>
<span class="t" style="left:297.90px;top:63.00px;font-size:12px;line-height:12px;color:#1e1e1e;letter-spacing:-0.390px;">Label</span>
<span class="t" style="left:455.49px;top:63.00px;font-size:12px;line-height:12px;color:#1e1e1e;letter-spacing:-0.178px;">Times New Roman</span>
<span class="t" style="left:605.28px;top:63.00px;font-size:12px;line-height:12px;color:#1e1e1e;letter-spacing:-1.341px;">10</span>
<span class="t" style="left:8.90px;top:89.00px;font-size:12px;line-height:12px;color:#ffffff;letter-spacing:-0.043px;">Development - New Email*</span>
<span class="t" style="left:22.80px;top:112.00px;font-size:12px;line-height:12px;color:#1e1e1e;letter-spacing:-0.374px;">Record ID</span>
<span class="t" style="left:120.80px;top:112.00px;font-size:12px;line-height:12px;color:#1e1e1e;letter-spacing:-0.113px;">Date and time when record was created</span>
<span class="t" style="left:376.50px;top:112.00px;font-size:12px;line-height:12px;color:#1e1e1e;letter-spacing:-0.069px;">Date and time when record was updated</span>
<span class="t" style="left:637.50px;top:112.00px;font-size:12px;line-height:12px;color:#1e1e1e;letter-spacing:-0.099px;">Date and time when record was closed</span>
<span class="t" style="left:885.80px;top:88.00px;font-size:12px;line-height:12px;color:#1e1e1e;letter-spacing:-0.016px;">Development</span>
<span class="t" style="left:915.90px;top:113.00px;font-size:12px;line-height:12px;color:#1e1e1e;letter-spacing:-0.231px;">Filter:</span>
<span class="t" style="left:885.60px;top:418.00px;font-size:12px;line-height:12px;color:#1e1e1e;letter-spacing:-0.168px;">Properties</span>
<span class="t" style="left:980.00px;top:443.00px;font-size:12px;line-height:12px;color:#7a7a7a;letter-spacing:-0.315px;">Label</span>
<span class="t" style="left:897.24px;top:468.00px;font-size:12px;line-height:12px;color:#1e1e1e;font-weight:700;letter-spacing:-0.218px;">Object</span>
<span class="t" style="left:896.97px;top:487.00px;font-size:12px;line-height:12px;color:#1e1e1e;font-weight:700;letter-spacing:-0.238px;">Format</span>
<span class="t" style="left:897.00px;top:506.00px;font-size:12px;line-height:12px;color:#1e1e1e;letter-spacing:0.060px;">Name</span>
<span class="t" style="left:897.40px;top:525.00px;font-size:12px;line-height:12px;color:#1e1e1e;letter-spacing:-0.015px;">Caption</span>
<span class="t" style="left:897.79px;top:544.00px;font-size:12px;line-height:12px;color:#1e1e1e;letter-spacing:-0.380px;">Visible</span>
<span class="t" style="left:897.00px;top:563.00px;font-size:12px;line-height:12px;color:#1e1e1e;letter-spacing:-0.421px;">Back Style</span>
<span class="t" style="left:897.00px;top:582.00px;font-size:12px;line-height:12px;color:#1e1e1e;letter-spacing:-0.234px;">Back Color</span>
<span class="t" style="left:897.24px;top:601.00px;font-size:12px;line-height:12px;color:#1e1e1e;letter-spacing:-0.331px;">Special Effect</span>
<span class="t" style="left:897.00px;top:620.00px;font-size:12px;line-height:12px;color:#1e1e1e;letter-spacing:-0.212px;">Fore Color</span>
<span class="t" style="left:897.79px;top:639.00px;font-size:12px;line-height:12px;color:#1e1e1e;letter-spacing:-0.065px;">Text Align</span>
<span class="t" style="left:897.17px;top:658.00px;font-size:12px;line-height:12px;color:#1e1e1e;font-weight:700;letter-spacing:-0.311px;">Position &amp; Size</span>
<span class="t" style="left:1082.50px;top:506.00px;font-size:12px;line-height:12px;color:#1e1e1e;letter-spacing:-0.240px;">Label</span>
<span class="t" style="left:1083.29px;top:525.00px;font-size:12px;line-height:12px;color:#1e1e1e;letter-spacing:0.031px;">Ticket №</span>
<span class="t" style="left:1082.68px;top:544.00px;font-size:12px;line-height:12px;color:#1e1e1e;letter-spacing:-0.560px;">1-Yes</span>
<span class="t" style="left:1083.05px;top:563.00px;font-size:12px;line-height:12px;color:#1e1e1e;letter-spacing:-0.205px;">0-Transparent</span>
<span class="t" style="left:1108.68px;top:582.00px;font-size:12px;line-height:12px;color:#1e1e1e;letter-spacing:-0.882px;">16777215</span>
<span class="t" style="left:1083.05px;top:601.00px;font-size:12px;line-height:12px;color:#1e1e1e;letter-spacing:-0.241px;">0-Flat</span>
<span class="t" style="left:1109.05px;top:620.00px;font-size:12px;line-height:12px;color:#1e1e1e;">0</span>
<span class="t" style="left:1083.05px;top:639.00px;font-size:12px;line-height:12px;color:#1e1e1e;letter-spacing:-0.101px;">0-Left</span>
<span class="t" style="left:885.24px;top:687.00px;font-size:12px;line-height:12px;color:#1e1e1e;font-weight:700;letter-spacing:-0.455px;">Caption</span>
<span class="t" style="left:86.49px;top:720.00px;font-size:12px;line-height:12px;color:#6e6e6e;letter-spacing:-0.484px;">View</span>
<span class="t" style="left:260.50px;top:720.00px;font-size:12px;line-height:12px;color:#6e6e6e;letter-spacing:0.060px;">Print</span>
<span class="t" style="left:413.64px;top:720.00px;font-size:12px;line-height:12px;color:#6e6e6e;letter-spacing:-0.194px;">Select Printer</span>
<span class="t" style="left:606.20px;top:720.00px;font-size:12px;line-height:12px;color:#6e6e6e;letter-spacing:-0.152px;">Export</span>
<span class="t" style="left:788.80px;top:720.00px;font-size:12px;line-height:12px;color:#6e6e6e;letter-spacing:-0.311px;">Run</span>
<span class="t" style="left:4.20px;top:745.00px;font-size:12px;line-height:12px;color:#ffffff;letter-spacing:0.201px;">Main window</span>
<span class="t" style="left:1101.61px;top:745.00px;font-size:12px;line-height:12px;color:#ffffff;letter-spacing:-0.767px;">5.4.8.34</span>
</body></html>
